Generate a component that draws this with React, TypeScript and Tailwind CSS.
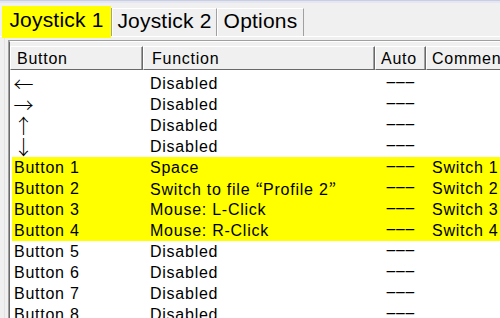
import React from 'react';
import clsx from 'clsx';

type Row = { button: string; func: React.ReactNode; comment?: string; hl?: boolean; arrow?: boolean };

const Q = ({ children }: { children: React.ReactNode }) => (
  <span className="font-['Noto_Sans_CJK_JP',sans-serif] tracking-normal">{children}</span>
);

const rows: Row[] = [
  { button: '←', func: 'Disabled', arrow: true },
  { button: '→', func: 'Disabled', arrow: true },
  { button: '↑', func: 'Disabled', arrow: true },
  { button: '↓', func: 'Disabled', arrow: true },
  { button: 'Button 1', func: 'Space', comment: 'Switch 1', hl: true },
  {
    button: 'Button 2',
    func: (
      <>
        Switch to file <Q>“</Q>Profile 2<Q>”</Q>
      </>
    ),
    comment: 'Switch 2',
    hl: true,
  },
  { button: 'Button 3', func: 'Mouse: L-Click', comment: 'Switch 3', hl: true },
  { button: 'Button 4', func: 'Mouse: R-Click', comment: 'Switch 4', hl: true },
  { button: 'Button 5', func: 'Disabled' },
  { button: 'Button 6', func: 'Disabled' },
  { button: 'Button 7', func: 'Disabled' },
  { button: 'Button 8', func: 'Disabled' },
];

const headCell = 'h-[24px] shrink-0 border-l border-t border-white border-b border-b-[#696969] border-r border-r-[#696969] shadow-[inset_-1px_0_0_#a0a0a0] pt-[2px] leading-[19px] whitespace-nowrap';

const Dashes = () => (
  <span className="inline-block origin-left scale-x-[2.2] -translate-y-[2px] tracking-[-1px]">---</span>
);

export default function App() {
  return (
    <div className="w-[500px] h-[318px] overflow-hidden bg-[#f0f0f0] font-['Liberation_Sans',Arial,sans-serif] text-black">
      {/* window top edge */}
      <div className="h-[3px] border-t border-[#c9cee2] bg-[#e4e7f2]" />

      {/* tabs */}
      <div className="flex items-end h-[33px] pl-[2px] text-[21px] tracking-[0.2px]">
        <div className="relative z-10 -mb-[2px] w-[109px] h-[32px] bg-[#ffff00] pt-[2px] leading-[24px] text-center">
          Joystick 1
        </div>
        <div className="ml-[1px] w-[105px] h-[28px] border-l border-t border-white border-r border-r-[#a0a0a0] shadow-[-1px_0_0_#a0a0a0] leading-[24px] text-center">
          Joystick 2
        </div>
        <div className="w-[87px] h-[28px] border-l border-t border-white border-r border-r-[#a0a0a0] leading-[24px] text-center">
          Options
        </div>
      </div>

      {/* tab page */}
      <div className="border-t border-white pl-[4px]">
        <div className="border-l border-[#e3e3e3] pl-[3px] pt-[3px]">
          <div className="w-[600px] border-l border-t border-[#a0a0a0]">
            <div className="border-l border-t border-[#696969] border-t-white">
              <div className="pt-[4px] text-[16px] tracking-[0.75px]">
                {/* header */}
                <div className="flex">
                  <div className={clsx(headCell, 'w-[133px] pl-[6px]')}>Button</div>
                  <div className={clsx(headCell, 'w-[232px] pl-[8px]')}>Function</div>
                  <div className={clsx(headCell, 'w-[51px] pl-[5px]')}>Auto</div>
                  <div className={clsx(headCell, 'w-[150px] pl-[5px]')}>Comment</div>
                </div>

                {/* rows */}
                <div className="bg-white pt-[3px] h-[300px]">
                  {rows.map((r, i) => (
                    <div
                      key={i}
                      className={clsx('flex ml-[2px] h-[21px] leading-[21px] whitespace-nowrap', r.hl && 'bg-[#ffff00]')}
                    >
                      <div className="w-[131px] shrink-0 pl-[1px] overflow-hidden">
                        {r.arrow ? (
                          <span className="block w-[21px] h-[21px] leading-[21px] text-center text-[20px] font-['Noto_Sans_CJK_JP',sans-serif] font-light tracking-normal overflow-hidden">
                            {r.button}
                          </span>
                        ) : (
                          <span className="pl-[1px]">{r.button}</span>
                        )}
                      </div>
                      <div className="w-[232px] shrink-0 pl-[7px]">{r.func}</div>
                      <div className="w-[51px] shrink-0 pl-[10px]">
                        <Dashes />
                      </div>
                      <div className="pl-[6px]">{r.comment}</div>
                    </div>
                  ))}
                </div>
              </div>
            </div>
          </div>
        </div>
      </div>
    </div>
  );
}
